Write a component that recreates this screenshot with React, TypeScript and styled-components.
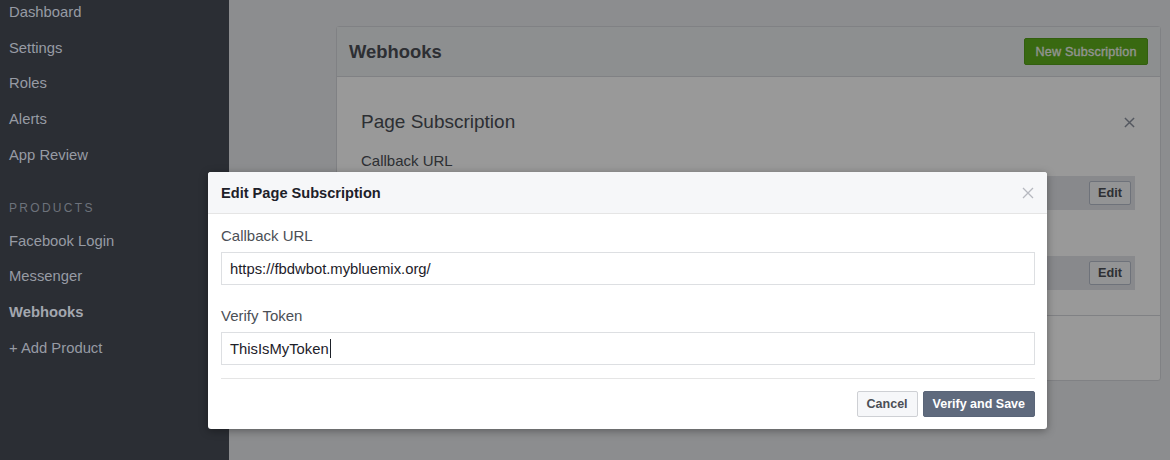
import React from "react";
import styled, { createGlobalStyle } from "styled-components";

const GlobalStyle = createGlobalStyle`
  html, body { margin: 0; padding: 0; }
  body {
    width: 1170px;
    height: 460px;
    overflow: hidden;
    background: #e9ebee;
    font-family: "Liberation Sans", Arial, Helvetica, sans-serif;
  }
  * { box-sizing: border-box; }
`;

const Page = styled.div`
  position: relative;
  display: grid;
  grid-template-columns: 229px 1fr;
  width: 1170px;
  height: 460px;
  overflow: hidden;
`;

const Sidebar = styled.nav`
  background: #2b2e34;
  display: flex;
  flex-direction: column;
`;

const NavList = styled.div`
  display: flex;
  flex-direction: column;
  margin-top: -6px;
`;

const NavItem = styled.div<{ $active?: boolean }>`
  height: 35.75px;
  display: flex;
  align-items: center;
  padding-left: 9px;
  font-size: 14.8px;
  color: ${(p) => (p.$active ? "#a3a7af" : "#979ba4")};
  font-weight: ${(p) => (p.$active ? 700 : 400)};
`;

const SectionHeading = styled.div`
  margin-top: 20px;
  height: 30px;
  display: flex;
  align-items: center;
  padding-left: 9px;
  font-size: 12px;
  letter-spacing: 2.3px;
  color: #6d727b;
  text-transform: uppercase;
`;

const Main = styled.main`
  position: relative;
  background: #e9ebee;
  padding: 26px 9px 0 107px;
`;

const Card = styled.section`
  width: 825px;
  background: #ffffff;
  border: 1px solid #d6d8dc;
  border-radius: 3px;
`;

const CardHeader = styled.header`
  display: flex;
  justify-content: space-between;
  align-items: center;
  height: 50px;
  padding: 0 12px;
  background: #eceef1;
  border-bottom: 1px solid #d6d8dc;
`;

const CardTitle = styled.h2`
  margin: 0;
  font-size: 18.4px;
  font-weight: 700;
  color: #4b4f56;
`;

const GreenButton = styled.button`
  height: 27px;
  width: 124px;
  padding: 0;
  background: #5fb01d;
  border: 1px solid #549f19;
  border-radius: 2px;
  color: #f4f6f2;
  font-family: inherit;
  font-size: 12.6px;
  font-weight: 400;
  letter-spacing: 0.2px;
  -webkit-text-stroke: 0.3px #f4f6f2;
`;

const Section = styled.div<{ $empty?: boolean }>`
  padding: ${(p) => (p.$empty ? "0" : "33px 25px 25px 24px")};
  height: ${(p) => (p.$empty ? "64px" : "auto")};
  border-bottom: ${(p) => (p.$empty ? "none" : "1px solid #d6d8dc")};
`;

const TitleRow = styled.div`
  display: flex;
  justify-content: space-between;
  align-items: center;
  height: 24px;
`;

const SectionTitle = styled.h3`
  margin: 0;
  font-size: 19px;
  font-weight: 400;
  color: #4b4f56;
`;

const CloseIcon = styled.svg<{ $size: number }>`
  width: ${(p) => p.$size}px;
  height: ${(p) => p.$size}px;
  display: block;
`;

const FieldLabel = styled.div<{ $gap: number }>`
  margin-top: ${(p) => p.$gap}px;
  font-size: 15px;
  line-height: 18px;
  color: #4b4f56;
`;

const ValueRow = styled.div`
  margin-top: 6px;
  height: 34px;
  display: flex;
  justify-content: flex-end;
  align-items: center;
  padding: 0 4px 0 12px;
  background: #e3e5e9;
`;

const EditButton = styled.button`
  width: 42px;
  height: 24px;
  padding: 0;
  background: #f6f7f9;
  border: 1px solid #b8bfcc;
  border-radius: 2px;
  color: #4b4f56;
  font-family: inherit;
  font-size: 12.7px;
  font-weight: 700;
`;

const Dim = styled.div`
  position: absolute;
  inset: 0;
  background: rgba(0, 0, 0, 0.4);
`;

const Modal = styled.div`
  position: absolute;
  left: 208px;
  top: 172px;
  width: 839px;
  background: #ffffff;
  border-radius: 3px;
  box-shadow: 0 2px 8px rgba(0, 0, 0, 0.35);
  overflow: hidden;
`;

const ModalHeader = styled.div`
  height: 42px;
  display: flex;
  justify-content: space-between;
  align-items: center;
  padding: 0 13px;
  background: #f6f7f9;
  border-bottom: 1px solid #e5e5e5;
`;

const ModalTitle = styled.h1`
  margin: 0;
  font-size: 14.6px;
  font-weight: 700;
  color: #1d2129;
`;

const ModalBody = styled.div`
  padding: 13px 12px 0 13px;
`;

const InputBox = styled.div`
  margin-top: 7px;
  height: 33px;
  display: flex;
  align-items: center;
  padding: 0 8px;
  border: 1px solid #dddfe2;
  font-size: 14.8px;
  color: #1d2129;
`;

const Caret = styled.span`
  display: inline-block;
  width: 1px;
  height: 19px;
  margin-left: 1px;
  background: #1d2129;
`;

const Divider = styled.div`
  margin-top: 13px;
  height: 1px;
  background: #e5e5e5;
`;

const Footer = styled.div`
  display: flex;
  justify-content: flex-end;
  gap: 5px;
  padding: 12px 0 12px;
`;

const FooterButton = styled.button<{ $primary?: boolean }>`
  height: 26px;
  padding: 0 9px;
  border-radius: 2px;
  font-family: inherit;
  font-size: 12.5px;
  font-weight: 700;
  background: ${(p) => (p.$primary ? "#5f6a7d" : "#f6f7f9")};
  border: 1px solid ${(p) => (p.$primary ? "#5a6578" : "#ced0d4")};
  color: ${(p) => (p.$primary ? "#ffffff" : "#4b4f56")};
`;

const XIcon = ({ size, color, width }: { size: number; color: string; width: number }) => (
  <CloseIcon $size={size} viewBox="0 0 12 12">
    <path d="M1 1 L11 11 M11 1 L1 11" stroke={color} strokeWidth={width} fill="none" />
  </CloseIcon>
);

const topNav = ["Dashboard", "Settings", "Roles", "Alerts", "App Review"];
const productNav = [
  { label: "Facebook Login" },
  { label: "Messenger" },
  { label: "Webhooks", active: true },
  { label: "+ Add Product" },
];

export default function App() {
  return (
    <>
      <GlobalStyle />
      <Page>
        <Sidebar>
          <NavList>
            {topNav.map((n) => (
              <NavItem key={n}>{n}</NavItem>
            ))}
            <SectionHeading>Products</SectionHeading>
            {productNav.map((n) => (
              <NavItem key={n.label} $active={n.active}>
                {n.label}
              </NavItem>
            ))}
          </NavList>
        </Sidebar>
        <Main>
          <Card>
            <CardHeader>
              <CardTitle>Webhooks</CardTitle>
              <GreenButton>New Subscription</GreenButton>
            </CardHeader>
            <Section>
              <TitleRow>
                <SectionTitle>Page Subscription</SectionTitle>
                <XIcon size={11} color="#8d93a0" width={1.6} />
              </TitleRow>
              <FieldLabel $gap={18}>Callback URL</FieldLabel>
              <ValueRow>
                <EditButton>Edit</EditButton>
              </ValueRow>
              <FieldLabel $gap={22}>Verify Token</FieldLabel>
              <ValueRow>
                <EditButton>Edit</EditButton>
              </ValueRow>
            </Section>
            <Section $empty />
          </Card>
          <Dim />
        </Main>
        <Modal>
          <ModalHeader>
            <ModalTitle>Edit Page Subscription</ModalTitle>
            <XIcon size={12} color="#b6b9c0" width={1.3} />
          </ModalHeader>
          <ModalBody>
            <FieldLabel $gap={0}>Callback URL</FieldLabel>
            <InputBox>https://fbdwbot.mybluemix.org/</InputBox>
            <FieldLabel $gap={22}>Verify Token</FieldLabel>
            <InputBox>
              ThisIsMyToken
              <Caret />
            </InputBox>
            <Divider />
            <Footer>
              <FooterButton>Cancel</FooterButton>
              <FooterButton $primary>Verify and Save</FooterButton>
            </Footer>
          </ModalBody>
        </Modal>
      </Page>
    </>
  );
}
